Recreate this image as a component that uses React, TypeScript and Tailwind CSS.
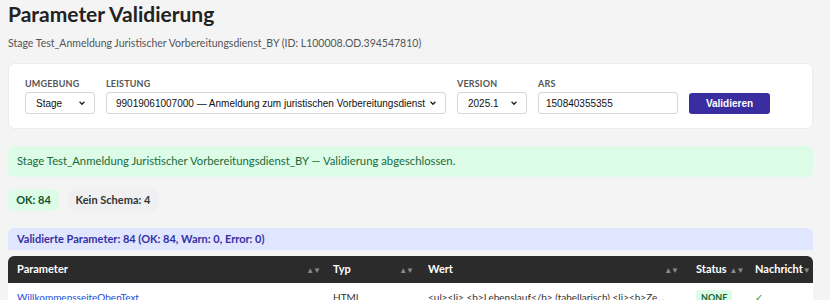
import React from 'react';

const sans = "font-['Lato','Noto_Sans',sans-serif]";
const arial = "font-['Liberation_Sans',Arial,sans-serif]";

function SortIcon({ only }: { only?: boolean }) {
  return <span className="text-[8px] tracking-[-1px] text-[#8a8a8a]">{only ? '▼' : '▲▼'}</span>;
}

function Chevron() {
  return (
    <svg width="8" height="8" viewBox="0 0 10 10" className="shrink-0">
      <path d="M2 3.5 L5 6.5 L8 3.5" fill="none" stroke="#222" strokeWidth="1.7" />
    </svg>
  );
}

function Field({ label, width, children }: { label: string; width: string; children: React.ReactNode }) {
  return (
    <div className={`flex flex-col ${width}`}>
      <span className="mb-[2px] h-[12px] text-[9px] font-bold uppercase leading-[12px] tracking-[0.02em] text-[#555]">{label}</span>
      {children}
    </div>
  );
}

const box = `flex h-[22px] items-center rounded-[3px] border border-[#d6d6d6] bg-white text-[10px] text-[#111] ${arial}`;

export default function App() {
  return (
    <div className={`h-[300px] w-[830px] overflow-hidden bg-[#f4f4f4] ${sans}`}>
      <div className="w-[813px] pl-2">
        <h1 className="h-[28px] text-[21px] font-bold leading-[28px] text-[#222]">Parameter Validierung</h1>
        <p className="mt-[6px] h-[18px] text-[10.5px] leading-[18px] text-[#555]">
          Stage Test_Anmeldung Juristischer Vorbereitungsdienst_BY (ID: L100008.OD.394547810)
        </p>

        <div className="mt-[11px] flex items-end gap-[11px] rounded-md border border-[#ececec] bg-white px-[16px] pb-[14px] pt-[14px]">
          <Field label="Umgebung" width="w-[70px]">
            <div className={`${box} justify-between pl-[10px] pr-[8px]`}>
              <span>Stage</span>
              <Chevron />
            </div>
          </Field>
          <Field label="Leistung" width="w-[340px]">
            <div className={`${box} justify-between pl-[9px] pr-[8px]`}>
              <span className="whitespace-nowrap">99019061007000 — Anmeldung zum juristischen Vorbereitungsdienst</span>
              <Chevron />
            </div>
          </Field>
          <Field label="Version" width="w-[70px]">
            <div className={`${box} justify-between pl-[10px] pr-[8px]`}>
              <span>2025.1</span>
              <Chevron />
            </div>
          </Field>
          <Field label="ARS" width="w-[140px]">
            <div className={`${box} px-[7px]`}>150840355355</div>
          </Field>
          <button className={`h-[21px] w-[81px] rounded-[3px] bg-[#3a2d9f] text-[10px] font-bold text-white ${arial}`}>
            Validieren
          </button>
        </div>

        <div className="mt-[17px] flex h-[31px] items-center rounded-md bg-[#dcfce8] px-[9px] text-[11.3px] text-[#1b6b3a]">
          Stage Test_Anmeldung Juristischer Vorbereitungsdienst_BY — Validierung abgeschlossen.
        </div>

        <div className="mt-[12px] flex gap-[9px] text-[11px] font-bold">
          <span className="flex h-[22px] w-[51px] items-center justify-center rounded-md bg-[#dcfce8] text-[#14532d]">OK: 84</span>
          <span className="flex h-[22px] w-[90px] items-center justify-center rounded-md bg-[#f0f0f2] text-[#333]">Kein Schema: 4</span>
        </div>

        <div className="mt-[17px] flex h-[22px] items-center rounded-t-md bg-[#e0e6ff] px-[9px] text-[11px] font-bold text-[#3730a3]">
          Validierte Parameter: 84 (OK: 84, Warn: 0, Error: 0)
        </div>

        <div className="mt-[6px] overflow-hidden rounded-t-md bg-white">
          <div className="grid h-[27px] grid-cols-[316px_95px_268px_59px_67px] items-center bg-[#2b2b2b] text-[11px] font-bold text-white">
            <div className="flex items-center justify-between pl-[9px] pr-[4px]"><span>Parameter</span><SortIcon /></div>
            <div className="flex items-center justify-between pl-[9px] pr-[6px]"><span>Typ</span><SortIcon /></div>
            <div className="flex items-center justify-between pl-[9px] pr-[9px]"><span>Wert</span><SortIcon /></div>
            <div className="flex items-center gap-[3px] pl-[9px]"><span>Status</span><SortIcon /></div>
            <div className="flex items-center whitespace-nowrap pl-[9px]"><span>Nachricht</span><SortIcon only /></div>
          </div>
          <div className="grid h-[28px] grid-cols-[316px_95px_268px_59px_67px] items-center text-[10px] text-[#333]">
            <div className="pl-[9px]"><a className="text-[#1d4ed8] underline">WillkommensseiteObenText</a></div>
            <div className="pl-[9px]">HTML</div>
            <div className="truncate pl-[9px] pr-[8px]">&lt;ul&gt;&lt;li&gt; &lt;b&gt;Lebenslauf&lt;/b&gt; (tabellarisch) &lt;li&gt;&lt;b&gt;Ze...</div>
            <div className="pl-[9px]"><span className="rounded-[3px] bg-[#dcfce8] px-[5px] py-[2px] text-[9px] font-bold text-[#166534]">NONE</span></div>
            <div className="pl-[9px] text-[#3a9a5a]">✓</div>
          </div>
        </div>
      </div>
    </div>
  );
}
